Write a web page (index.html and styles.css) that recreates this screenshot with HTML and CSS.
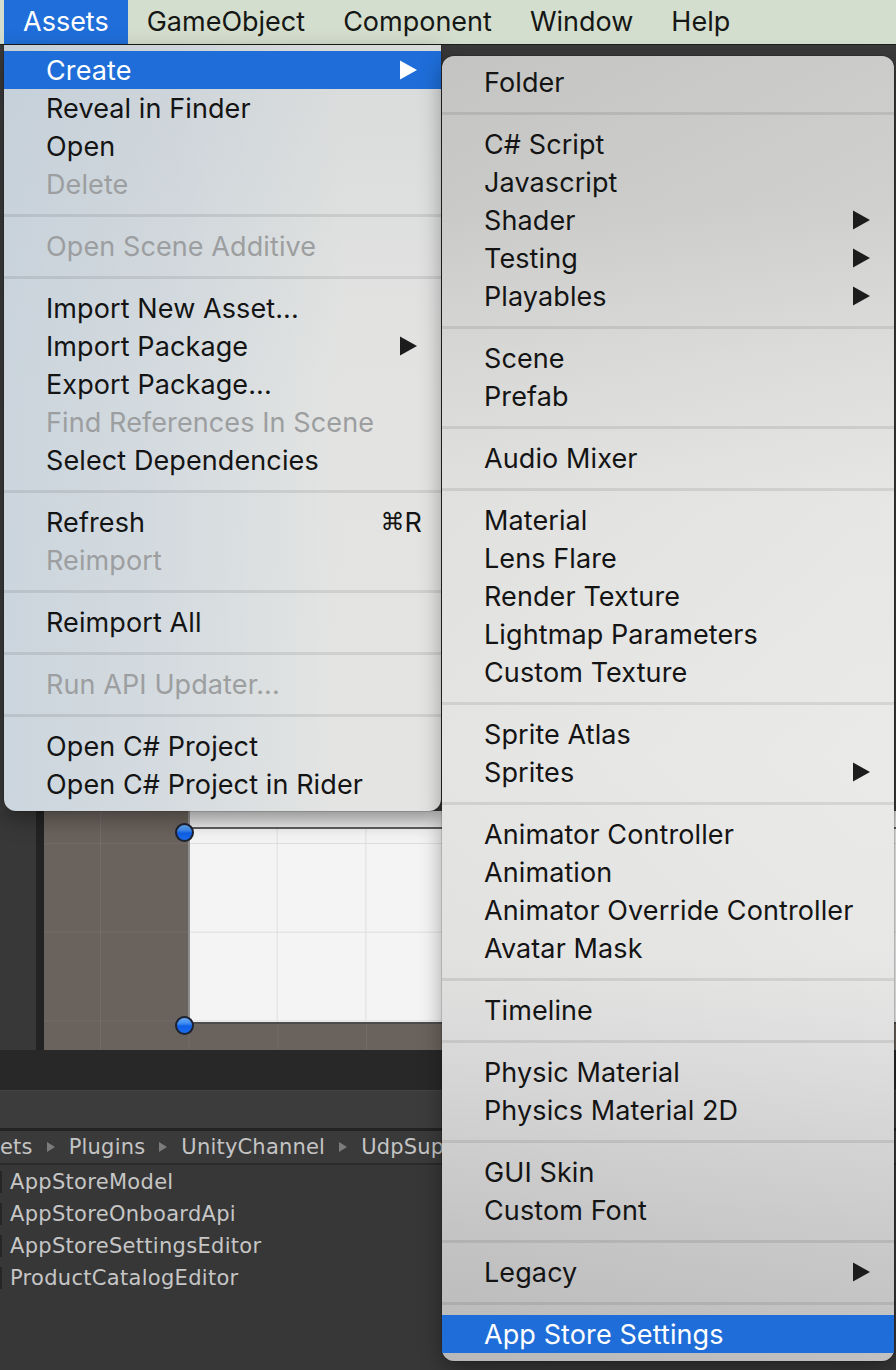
FILE: index.html
```html
<!DOCTYPE html>
<html>
<head>
<meta charset="utf-8">
<link rel="stylesheet" href="styles.css">
</head>
<body>
<div class="screen">
  <div class="menubar">
    <span class="mb-item active">Assets</span>
    <span class="mb-item">GameObject</span>
    <span class="mb-item">Component</span>
    <span class="mb-item">Window</span>
    <span class="mb-item">Help</span>
  </div>

  <div class="workspace"></div>

  <div class="scene-row">
    <div class="side-panel"></div>
    <div class="divider"></div>
    <div class="scene">
      <div class="canvas-rect">
        <div class="canvas-top"></div>
        <div class="canvas-line"></div>
        <div class="canvas-body"></div>
      </div>
      <span class="handle handle-top"></span>
      <span class="handle handle-bottom"></span>
    </div>
  </div>

  <div class="dark-bar"></div>
  <div class="toolbar"></div>
  <div class="breadcrumb">
    <span>ets</span><span class="crumb-arrow"></span>
    <span>Plugins</span><span class="crumb-arrow"></span>
    <span>UnityChannel</span><span class="crumb-arrow"></span>
    <span>UdpSupport</span>
  </div>
  <ul class="file-list">
    <li><span class="file-icon"></span>AppStoreModel</li>
    <li><span class="file-icon"></span>AppStoreOnboardApi</li>
    <li><span class="file-icon"></span>AppStoreSettingsEditor</li>
    <li><span class="file-icon"></span>ProductCatalogEditor</li>
  </ul>

  <div class="menu menu-main">
    <div class="item selected">Create<svg class="arrow" viewBox="0 0 18 20"><polygon points="0,0 18,10 0,20"/></svg></div>
    <div class="item">Reveal in Finder</div>
    <div class="item">Open</div>
    <div class="item disabled">Delete</div>
    <div class="sep"></div>
    <div class="item disabled">Open Scene Additive</div>
    <div class="sep"></div>
    <div class="item">Import New Asset...</div>
    <div class="item">Import Package<svg class="arrow" viewBox="0 0 18 20"><polygon points="0,0 18,10 0,20"/></svg></div>
    <div class="item">Export Package...</div>
    <div class="item disabled">Find References In Scene</div>
    <div class="item">Select Dependencies</div>
    <div class="sep"></div>
    <div class="item shortcut-item">Refresh<span class="shortcut"><span class="cmd">⌘</span>R</span></div>
    <div class="item disabled">Reimport</div>
    <div class="sep"></div>
    <div class="item">Reimport All</div>
    <div class="sep"></div>
    <div class="item disabled">Run API Updater...</div>
    <div class="sep"></div>
    <div class="item">Open C# Project</div>
    <div class="item">Open C# Project in Rider</div>
  </div>

  <div class="menu menu-sub">
    <div class="item">Folder</div>
    <div class="sep"></div>
    <div class="item">C# Script</div>
    <div class="item">Javascript</div>
    <div class="item">Shader<svg class="arrow" viewBox="0 0 18 20"><polygon points="0,0 18,10 0,20"/></svg></div>
    <div class="item">Testing<svg class="arrow" viewBox="0 0 18 20"><polygon points="0,0 18,10 0,20"/></svg></div>
    <div class="item">Playables<svg class="arrow" viewBox="0 0 18 20"><polygon points="0,0 18,10 0,20"/></svg></div>
    <div class="sep"></div>
    <div class="item">Scene</div>
    <div class="item">Prefab</div>
    <div class="sep"></div>
    <div class="item">Audio Mixer</div>
    <div class="sep"></div>
    <div class="item">Material</div>
    <div class="item">Lens Flare</div>
    <div class="item">Render Texture</div>
    <div class="item">Lightmap Parameters</div>
    <div class="item">Custom Texture</div>
    <div class="sep"></div>
    <div class="item">Sprite Atlas</div>
    <div class="item">Sprites<svg class="arrow" viewBox="0 0 18 20"><polygon points="0,0 18,10 0,20"/></svg></div>
    <div class="sep"></div>
    <div class="item">Animator Controller</div>
    <div class="item">Animation</div>
    <div class="item">Animator Override Controller</div>
    <div class="item">Avatar Mask</div>
    <div class="sep"></div>
    <div class="item">Timeline</div>
    <div class="sep"></div>
    <div class="item">Physic Material</div>
    <div class="item">Physics Material 2D</div>
    <div class="sep"></div>
    <div class="item">GUI Skin</div>
    <div class="item">Custom Font</div>
    <div class="sep"></div>
    <div class="item">Legacy<svg class="arrow" viewBox="0 0 18 20"><polygon points="0,0 18,10 0,20"/></svg></div>
    <div class="sep"></div>
    <div class="item selected">App Store Settings</div>
  </div>
</div>
</body>
</html>
```
FILE: styles.css
```css
html, body {
  margin: 0;
  padding: 0;
}

body {
  background: #2b2b2b;
  font-family: "Inter", "Noto Sans", sans-serif;
}

.screen {
  position: relative;
  width: 896px;
  height: 1370px;
  overflow: hidden;
  display: flex;
  flex-direction: column;
}

/* ---------- macOS menu bar ---------- */
.menubar {
  flex: none;
  height: 44px;
  display: flex;
  padding-left: 4px;
  background: #d4dece;
  border-bottom: 1px solid #1c2119;
}

.mb-item {
  padding: 0 19px;
  font-size: 27px;
  line-height: 44px;
  color: #151714;
}

.mb-item.active {
  padding: 0 19px;
  background: #1f6ed9;
  color: #ffffff;
}

/* ---------- Unity editor behind ---------- */
.workspace {
  flex: none;
  height: 766px;
  background: #3a3a3a;
}

.scene-row {
  flex: none;
  height: 239px;
  display: flex;
}

.side-panel {
  width: 36px;
  background: #383838;
}

.divider {
  width: 8px;
  background: #232323;
}

.scene {
  position: relative;
  flex: 1;
  background-color: #6a625c;
  background-image:
    linear-gradient(to right, rgba(255, 255, 255, 0.06) 1px, transparent 1px),
    linear-gradient(to bottom, rgba(255, 255, 255, 0.06) 1px, transparent 1px);
  background-size: 88.7px 88.7px;
  background-position: 56px 32px;
}

.canvas-rect {
  position: absolute;
  left: 144px;
  top: 0;
  right: 0;
  height: 211px;
  display: flex;
  flex-direction: column;
  border-left: 2px solid #8e8e8e;
  border-bottom: 2px solid #4c4c4c;
}

.canvas-top {
  height: 16px;
  background: linear-gradient(to bottom, #d8d8d8, #ececec);
}

.canvas-line {
  height: 2px;
  background: #5e5e5e;
}

.canvas-body {
  flex: 1;
  background-color: #f4f4f4;
  background-image:
    linear-gradient(to right, #dedede 1px, transparent 1px),
    linear-gradient(to bottom, #dedede 1px, transparent 1px);
  background-size: 88.7px 88.7px;
  background-position: -2px 14px;
}

.handle {
  position: absolute;
  left: 131px;
  width: 15px;
  height: 15px;
  border-radius: 50%;
  border: 2px solid #1d2230;
  background: linear-gradient(to bottom, #6aa8f6 0%, #3e8cf2 35%, #0f5fe6 55%, #1a6cf0 100%);
}

.handle-top {
  top: 12px;
}

.handle-bottom {
  top: 205px;
}

.dark-bar {
  flex: none;
  height: 40px;
  background: #282828;
}

.toolbar {
  flex: none;
  height: 37px;
  background: #3c3c3c;
  border-top: 1px solid #444444;
  border-bottom: 3px solid #232323;
}

.breadcrumb {
  flex: none;
  height: 32px;
  display: flex;
  align-items: center;
  gap: 14px;
  background: #3a3a3a;
  border-bottom: 2px solid #2a2a2a;
  font-family: "DejaVu Sans", sans-serif;
  font-size: 21px;
  letter-spacing: 0.2px;
  color: #c4c4c4;
  white-space: nowrap;
}

.crumb-arrow {
  width: 0;
  height: 0;
  border-top: 5px solid transparent;
  border-bottom: 5px solid transparent;
  border-left: 8px solid #7c7c7c;
}

.file-list {
  flex: 1;
  margin: 0;
  padding: 1px 0 0;
  list-style: none;
  background: #373737;
  font-family: "DejaVu Sans", sans-serif;
  font-size: 21px;
  letter-spacing: 0.3px;
  color: #c6c6c6;
}

.file-list li {
  height: 32px;
  line-height: 32px;
  display: flex;
  align-items: center;
  gap: 8px;
}

.file-icon {
  width: 2px;
  height: 22px;
  background: #262626;
}

/* ---------- Menus ---------- */
.menu {
  position: absolute;
  box-sizing: border-box;
  font-size: 27px;
  color: #141414;
  box-shadow: 0 8px 22px rgba(0, 0, 0, 0.35), 0 0 0 1px rgba(0, 0, 0, 0.12);
}

.menu-main {
  left: 4px;
  top: 45px;
  width: 437px;
  padding: 6px 0 8px;
  border-radius: 0 0 12px 12px;
  background:
    linear-gradient(to right, rgba(170, 192, 214, 0.42) 0%, rgba(170, 192, 214, 0.25) 40%, rgba(170, 192, 214, 0) 78%),
    linear-gradient(to bottom, #d9dbdb 0%, #e3e4e2 45%, #e4e5e3 100%);
}

.menu-sub {
  left: 442px;
  top: 56px;
  width: 452px;
  padding: 7px 0 8px;
  border-radius: 12px;
  background:
    linear-gradient(to right, rgba(0, 0, 0, 0.02) 0%, rgba(255, 255, 255, 0.06) 100%),
    linear-gradient(to bottom, #c8c9c7 0px, #cdcecc 150px, #dbdcda 300px, #e5e5e3 450px, #e9e9e7 700px, #e6e6e5 900px, #dcdcdc 1000px, #d0d0d0 1100px, #c5c5c5 1200px, #bcbcbc 1305px);
}

.item {
  height: 38px;
  display: flex;
  align-items: center;
  justify-content: space-between;
  padding: 0 24px 0 42px;
  white-space: nowrap;
  letter-spacing: 0.1px;
}

.item.disabled {
  color: #9c9ea0;
}

.item.selected {
  background: #1e6dd8;
  color: #ffffff;
}

.shortcut-item {
  padding-right: 19px;
}

.shortcut {
  display: flex;
  align-items: center;
}

.cmd {
  font-family: "DejaVu Sans", sans-serif;
  font-size: 24px;
}

.arrow {
  width: 17px;
  height: 20px;
  fill: #1c1c1c;
}

.selected .arrow {
  fill: #ffffff;
}

.sep {
  height: 24px;
  display: flex;
  align-items: center;
}

.sep::before {
  content: "";
  flex: 1;
  height: 3px;
  background: rgba(0, 0, 0, 0.085);
}
```
